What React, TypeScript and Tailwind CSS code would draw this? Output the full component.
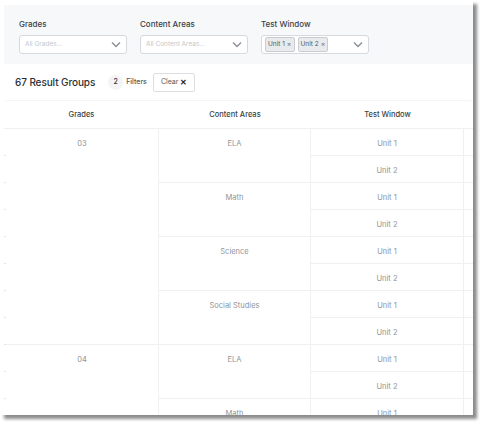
import React from "react";

const font = { fontFamily: "Inter, 'Noto Sans', sans-serif" };

function Chevron() {
  return (
    <svg width="10" height="7" viewBox="0 0 10 7" className="shrink-0">
      <path d="M1 1.5 L5 5.5 L9 1.5" fill="none" stroke="#8a8f96" strokeWidth="1.4" />
    </svg>
  );
}

function SelectBox({ label, placeholder, children }: { label: string; placeholder?: string; children?: React.ReactNode }) {
  return (
    <div className="flex flex-col w-[108px]">
      <div className="text-[8px] font-medium text-[#3a3f45] leading-none mb-[7px]">{label}</div>
      <div className="h-[19px] flex items-center justify-between rounded-[3px] border border-[#d6d9dd] bg-white pl-[3px] pr-[5px]">
        {children ?? <span className="text-[6.5px] text-[#c4c7cb] pl-[2px]">{placeholder}</span>}
        <Chevron />
      </div>
    </div>
  );
}

function Chip({ text }: { text: string }) {
  return (
    <span className="h-[15px] flex items-center gap-[2px] rounded-[2px] border border-[#c9ccd0] bg-[#e9eaec] px-[2px] text-[6.5px] text-[#555a60] mr-[3px]">
      {text}
      <span className="text-[7px] text-[#70757b]">×</span>
    </span>
  );
}

const cell = "text-[7.5px] text-[#909398] font-normal pt-[9px] text-center";

export default function App() {
  const grades = [
    { g: "03", areas: ["ELA", "Math", "Science", "Social Studies"] },
    { g: "04", areas: ["ELA", "Math", "Science", "Social Studies"] },
  ];
  const units = grades.flatMap((g) => g.areas.flatMap(() => ["Unit 1", "Unit 2"]));
  return (
    <div className="w-[484px] h-[426px] bg-white antialiased" style={font}>
      <div className="w-[473px] h-[415px] overflow-hidden bg-white shadow-[4px_4px_3px_rgba(0,0,0,0.45)] pl-[4px] pt-[5px]">
        <div className="h-[59px] bg-[#f7f8fa] flex gap-[13px] pl-[15px] pt-[15px]">
          <SelectBox label="Grades" placeholder="All Grades..." />
          <SelectBox label="Content Areas" placeholder="All Content Areas..." />
          <SelectBox label="Test Window">
            <div className="flex items-center">
              <Chip text="Unit 1" />
              <Chip text="Unit 2" />
            </div>
          </SelectBox>
        </div>
        <div className="h-[36px] flex items-center pl-[11px]">
          <span className="text-[10px] font-medium text-[#2b2f33] tracking-[-0.1px]">67 Result Groups</span>
          <span className="ml-[13px] w-[15px] h-[15px] rounded-full bg-[#f3f4f6] flex items-center justify-center text-[7px] font-medium text-[#333]">2</span>
          <span className="ml-[3px] text-[7px] font-medium text-[#555]">Filters</span>
          <span className="ml-[6px] h-[19px] px-[7px] flex items-center gap-[2px] border border-[#dcdfe2] rounded-[2px] bg-white text-[7px] text-[#555]">
            Clear <span className="font-bold text-[8px] text-[#222]">✕</span>
          </span>
        </div>
        <div className="h-[29px] flex items-center border-b border-[#eef0f2] rounded-t-[3px] border-t border-t-[#f4f5f6] text-[7.5px] font-medium text-[#3a3f45]">
          <div className="w-[155px] shrink-0 text-center">Grades</div>
          <div className="w-[152px] shrink-0 text-center">Content Areas</div>
          <div className="w-[153px] shrink-0 text-center">Test Window</div>
        </div>
        <div className="flex">
          <div className="w-[2px] shrink-0 flex flex-col">
            {units.map((_, i) => (
              <div key={i} className="h-[27px] border-b border-[#e3e5e8] shrink-0" />
            ))}
          </div>
          <div className="w-[153px] shrink-0 flex flex-col border-r border-[#eef0f2]">
            {grades.map((g) => (
              <div key={g.g} className={`h-[216px] shrink-0 border-b border-[#eef0f2] ${cell}`}>{g.g}</div>
            ))}
          </div>
          <div className="w-[152px] shrink-0 flex flex-col border-r border-[#eef0f2]">
            {grades.flatMap((g) => g.areas).map((a, i) => (
              <div key={i} className={`h-[54px] shrink-0 border-b border-[#eef0f2] ${cell}`}>{a}</div>
            ))}
          </div>
          <div className="w-[153px] shrink-0 flex flex-col border-r border-[#eef0f2]">
            {units.map((u, i) => (
              <div key={i} className={`h-[27px] shrink-0 border-b border-[#eef0f2] ${cell}`}>{u}</div>
            ))}
          </div>
          <div className="w-[40px] shrink-0 flex flex-col">
            {units.map((_, i) => (
              <div key={i} className="h-[27px] shrink-0 border-b border-[#eef0f2]" />
            ))}
          </div>
        </div>
      </div>
    </div>
  );
}
